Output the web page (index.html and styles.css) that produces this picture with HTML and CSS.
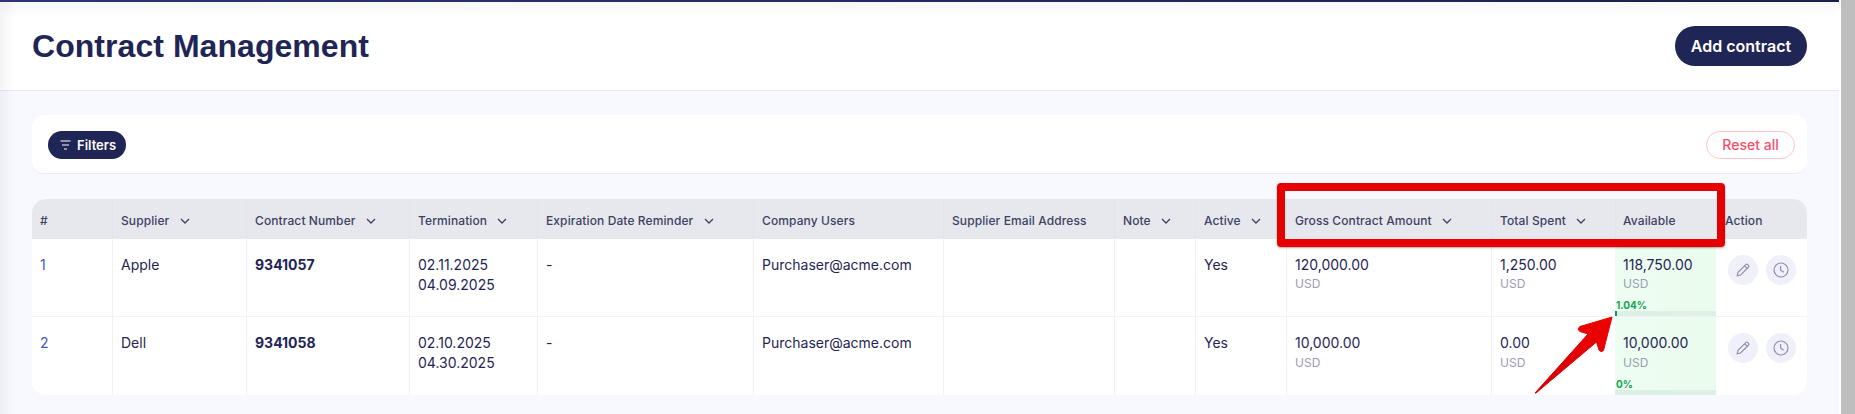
FILE: index.html
```html
<!DOCTYPE html>
<html lang="en">
<head>
    <meta charset="UTF-8">
    <title>Contract Management</title>
    <link rel="stylesheet" href="styles.css">
</head>
<body>
<div class="main">
    <div class="topbar"></div>
    <div class="header">
        <h1>Contract Management</h1>
        <a href="#" class="btn-add">Add contract</a>
    </div>
    <div class="content">
        <div class="filters">
            <a href="#" class="btn-filters">
                <svg width="11" height="10" viewBox="0 0 11 10"><path d="M0.5 1H10.5M2 5H9M4 9H7" fill="none" stroke="#fff" stroke-width="1.2"/></svg>
                Filters
            </a>
            <a href="#" class="btn-reset">Reset all</a>
        </div>
        <div class="table-wrap">
            <table>
                <colgroup>
                    <col class="c-num"><col class="c-supplier"><col class="c-contract"><col class="c-term"><col class="c-reminder"><col class="c-users"><col class="c-email"><col class="c-note"><col class="c-active"><col class="c-gross"><col class="c-spent"><col class="c-avail"><col class="c-action">
                </colgroup>
                <thead>
                <tr>
                    <th>#</th>
                    <th>Supplier <svg class="chev" viewBox="0 0 10 6"><path d="M1 1L5 5L9 1"/></svg></th>
                    <th>Contract Number <svg class="chev" viewBox="0 0 10 6"><path d="M1 1L5 5L9 1"/></svg></th>
                    <th>Termination <svg class="chev" viewBox="0 0 10 6"><path d="M1 1L5 5L9 1"/></svg></th>
                    <th>Expiration Date Reminder <svg class="chev" viewBox="0 0 10 6"><path d="M1 1L5 5L9 1"/></svg></th>
                    <th>Company Users</th>
                    <th>Supplier Email Address</th>
                    <th>Note <svg class="chev" viewBox="0 0 10 6"><path d="M1 1L5 5L9 1"/></svg></th>
                    <th>Active <svg class="chev" viewBox="0 0 10 6"><path d="M1 1L5 5L9 1"/></svg></th>
                    <th>Gross Contract Amount <svg class="chev" viewBox="0 0 10 6"><path d="M1 1L5 5L9 1"/></svg></th>
                    <th>Total Spent <svg class="chev" viewBox="0 0 10 6"><path d="M1 1L5 5L9 1"/></svg></th>
                    <th class="th-avail">Available</th>
                    <th class="th-action">Action</th>
                </tr>
                </thead>
                <tbody>
                <tr>
                    <td><a href="#" class="row-link">1</a></td>
                    <td>Apple</td>
                    <td><b>9341057</b></td>
                    <td>02.11.2025<br>04.09.2025</td>
                    <td>-</td>
                    <td>Purchaser@acme.com</td>
                    <td></td>
                    <td></td>
                    <td>Yes</td>
                    <td>120,000.00<div class="currency">USD</div></td>
                    <td>1,250.00<div class="currency">USD</div></td>
                    <td class="avail">118,750.00<div class="currency">USD</div>
                        <div class="progress">
                            <div class="progress-label">1.04%</div>
                            <div class="progress-track"><div class="progress-fill" style="width: 2px"></div></div>
                        </div>
                    </td>
                    <td class="actions">
                        <div class="action-btns">
                            <a href="#" class="icon-btn"><svg width="16" height="16" viewBox="0 0 16 16"><path d="M2.2 13.8L3 10.4L10.8 2.6A1.4 1.4 0 0 1 12.8 2.6L13.4 3.2A1.4 1.4 0 0 1 13.4 5.2L5.6 13L2.2 13.8ZM9.6 3.8L12.2 6.4"/></svg></a>
                            <a href="#" class="icon-btn"><svg width="16" height="16" viewBox="0 0 16 16"><circle cx="8" cy="8" r="7"/><path d="M7.6 4V8.2L10.8 10.2"/></svg></a>
                        </div>
                    </td>
                </tr>
                <tr>
                    <td><a href="#" class="row-link">2</a></td>
                    <td>Dell</td>
                    <td><b>9341058</b></td>
                    <td>02.10.2025<br>04.30.2025</td>
                    <td>-</td>
                    <td>Purchaser@acme.com</td>
                    <td></td>
                    <td></td>
                    <td>Yes</td>
                    <td>10,000.00<div class="currency">USD</div></td>
                    <td>0.00<div class="currency">USD</div></td>
                    <td class="avail">10,000.00<div class="currency">USD</div>
                        <div class="progress">
                            <div class="progress-label">0%</div>
                            <div class="progress-track"></div>
                        </div>
                    </td>
                    <td class="actions">
                        <div class="action-btns">
                            <a href="#" class="icon-btn"><svg width="16" height="16" viewBox="0 0 16 16"><path d="M2.2 13.8L3 10.4L10.8 2.6A1.4 1.4 0 0 1 12.8 2.6L13.4 3.2A1.4 1.4 0 0 1 13.4 5.2L5.6 13L2.2 13.8ZM9.6 3.8L12.2 6.4"/></svg></a>
                            <a href="#" class="icon-btn"><svg width="16" height="16" viewBox="0 0 16 16"><circle cx="8" cy="8" r="7"/><path d="M7.6 4V8.2L10.8 10.2"/></svg></a>
                        </div>
                    </td>
                </tr>
                </tbody>
            </table>
        </div>
    </div>
    <!-- annotations drawn over the screenshot -->
    <div class="mark-box"></div>
    <svg class="mark-arrow" width="90" height="90" viewBox="0 0 90 90">
        <defs>
            <linearGradient id="arrowFill" x1="1" y1="0" x2="0" y2="1">
                <stop offset="0" stop-color="#f00000"/>
                <stop offset="1" stop-color="#cf0008"/>
            </linearGradient>
        </defs>
        <path d="M87 2L55 11.5Q51.500 14 55 16.500L63 19L10 78L11 78L71.500 27L74 35Q76 38 78.500 35.500Z" fill="url(#arrowFill)" stroke="url(#arrowFill)" stroke-width="1" stroke-linejoin="round"/>
    </svg>
</div>
<div class="scrollbar"></div>
</body>
</html>
```

FILE: styles.css
```css
* {
    box-sizing: border-box;
}

html, body {
    margin: 0;
    padding: 0;
    height: 100%;
    overflow: hidden;
}

body {
    display: flex;
    background: #fff;
    font: 14px/20px Inter, "Noto Sans", sans-serif;
    color: #1f2555;
}

a {
    text-decoration: none;
}

.main {
    flex: 1;
    min-width: 0;
    position: relative;
    background: #f8f9fe;
}

/* soft shade from the hidden sidebar */
.main::before {
    content: "";
    position: absolute;
    left: 0;
    top: 0;
    bottom: 0;
    width: 14px;
    background: linear-gradient(90deg, rgba(30, 35, 85, .05), rgba(30, 35, 85, 0));
    z-index: 1;
}

.scrollbar {
    flex: 0 0 14px;
    margin-left: 2px;
    background: #bebebe;
}

.topbar {
    height: 2px;
    position: relative;
    z-index: 2;
    background: linear-gradient(90deg, #2c3379, #1a1f4f);
    box-shadow: 0 3px 12px rgba(30, 35, 85, .22);
}

.header {
    height: 89px;
    padding: 0 32px;
    display: flex;
    align-items: center;
    justify-content: space-between;
    background: #fff;
    border-bottom: 1px solid #e8e9f2;
}

h1 {
    margin: 0;
    font: bold 32px/40px "Liberation Sans", Arial, sans-serif;
    letter-spacing: .05px;
    color: #1f2555;
}

.btn-add {
    width: 132px;
    height: 40px;
    border-radius: 20px;
    background: #1f2555;
    color: #fff;
    font-size: 16px;
    font-weight: 600;
    line-height: 40px;
    text-align: center;
}

.content {
    padding: 24px 32px 0;
}

.filters {
    height: 59px;
    padding: 16px 12px 0 16px;
    display: flex;
    justify-content: space-between;
    align-items: flex-start;
    background: #fff;
    border-radius: 12px;
    border-bottom: 1px solid #e8e9f2;
}

.btn-filters {
    width: 78px;
    height: 28px;
    padding-left: 12px;
    display: flex;
    align-items: center;
    gap: 6px;
    border-radius: 14px;
    background: #1f2555;
    color: #fff;
    font-size: 13px;
    font-weight: 600;
}

.btn-reset {
    width: 89px;
    height: 28px;
    border: 1px solid #ffc4cc;
    border-radius: 14px;
    color: #f8506a;
    font-size: 14px;
    font-weight: 500;
    line-height: 26px;
    text-align: center;
}

.table-wrap {
    margin-top: 25px;
    border-radius: 14px;
    overflow: hidden;
    background: #fff;
}

table {
    width: 1775px;
    table-layout: fixed;
    border-collapse: separate;
    border-spacing: 0;
}

.c-num { width: 80px; }
.c-supplier { width: 134px; }
.c-contract { width: 163px; }
.c-term { width: 128px; }
.c-reminder { width: 216px; }
.c-users { width: 190px; }
.c-email { width: 171px; }
.c-note { width: 81px; }
.c-active { width: 91px; }
.c-gross { width: 205px; }
.c-spent { width: 124px; }
.c-avail { width: 101px; }
.c-action { width: 91px; }

th {
    height: 40px;
    padding: 3px 8px 0;
    background: #e7e8ee;
    border-left: 1px solid #e1e2f2;
    font-size: 12px;
    font-weight: 500;
    letter-spacing: .1px;
    line-height: 16px;
    color: #3d4263;
    text-align: left;
    white-space: nowrap;
}

th:first-child,
td:first-child {
    border-left: 0;
}

th.th-avail {
    padding-left: 7px;
}

th.th-action {
    border-left: 0;
    padding-left: 9px;
}

.chev {
    width: 10px;
    height: 6px;
    margin-left: 7px;
    vertical-align: 1px;
    fill: none;
    stroke: #3d4263;
    stroke-width: 1.3;
}

td {
    padding: 16px 8px 0;
    vertical-align: top;
    border-left: 1px solid #f0f1f7;
    border-bottom: 1px solid #f0f1f7;
    white-space: nowrap;
}

tbody tr:last-child td {
    border-bottom: 0;
}

.row-link {
    color: #4057c8;
}

b {
    font-weight: 700;
}

.currency {
    margin-top: 1px;
    font-size: 12px;
    line-height: 16px;
    color: #9a9db2;
}

tbody tr:last-child .currency {
    margin-top: 2px;
}

td.avail {
    background: linear-gradient(90deg, #eefdf1, #eafcee);
    border-left: 0;
}

.progress {
    margin: 7px -8px 0 -8px;
}

tbody tr:last-child .progress {
    margin-top: 7px;
}

.progress-label {
    padding-left: 1px;
    font-size: 10px;
    font-weight: 700;
    line-height: 12px;
    color: #0fa64f;
}

.progress-track {
    height: 5px;
    background: #dcf0e3;
}

.progress-fill {
    height: 5px;
    background: #0a9d4e;
}

td.actions {
    padding: 0 0 0 12px;
    border-left: 0;
    vertical-align: top;
}

.action-btns {
    padding-top: 16px;
    display: flex;
    gap: 8px;
}

.icon-btn {
    width: 30px;
    height: 30px;
    display: flex;
    align-items: center;
    justify-content: center;
    border-radius: 50%;
    background: #f0f0fb;
}

.icon-btn svg {
    fill: none;
    stroke: #8d8fa8;
    stroke-width: 1.2;
}

/* red annotation frame and arrow */
.mark-box {
    position: absolute;
    left: 1277px;
    top: 183px;
    width: 448px;
    height: 64px;
    border: 8px solid #e60000;
    border-radius: 4px;
    box-shadow: 0 1px 2px rgba(0, 0, 0, .35);
    z-index: 3;
}

.mark-arrow {
    position: absolute;
    left: 1525px;
    top: 315px;
    z-index: 3;
}
```
